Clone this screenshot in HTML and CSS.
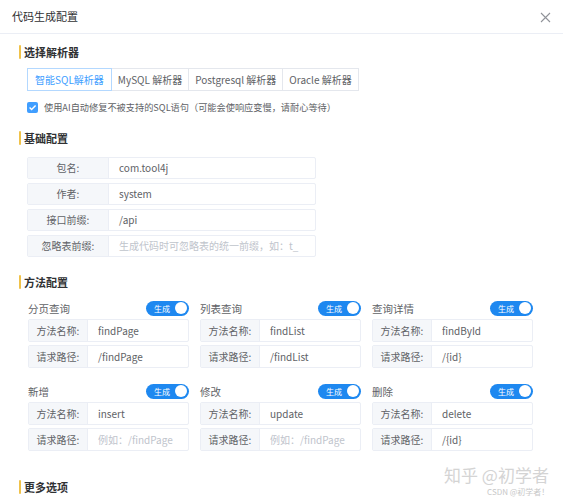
FILE: index.html
```html
<!doctype html>
<html>
<head>
<meta charset="utf-8">
<title>代码生成配置</title>
<link rel="stylesheet" href="styles.css">
</head>
<body>
<div class="dialog">
	<div class="dlg_head">
		<span class="dlg_title">代码生成配置</span>
		<svg class="close" width="11" height="11" viewBox="0 0 11 11"><path d="M1 1L10 10M10 1L1 10" stroke="#909399" stroke-width="1.1" fill="none"/></svg>
	</div>
	<div class="dlg_body">
		<!--选择解析器-->
		<h3 class="sec_tit">选择解析器</h3>
		<div class="tabs">
			<div class="tab active">智能SQL解析器</div>
			<div class="tab">MySQL 解析器</div>
			<div class="tab">Postgresql 解析器</div>
			<div class="tab">Oracle 解析器</div>
		</div>
		<div class="chk">
			<span class="chk_box"><svg width="11" height="11" viewBox="0 0 11 11"><path d="M2.6 5.6L4.6 7.6L8.6 3.4" stroke="#fff" stroke-width="1.4" fill="none"/></svg></span>
			<span>使用AI自动修复不被支持的SQL语句（可能会使响应变慢，请耐心等待）</span>
		</div>
		<!--基础配置-->
		<h3 class="sec_tit sec2">基础配置</h3>
		<div class="form">
			<div class="row"><div class="lab">包名:</div><div class="val">com.tool4j</div></div>
			<div class="row"><div class="lab">作者:</div><div class="val">system</div></div>
			<div class="row"><div class="lab">接口前缀:</div><div class="val">/api</div></div>
			<div class="row"><div class="lab">忽略表前缀:</div><div class="val ph">生成代码时可忽略表的统一前缀，如：t_</div></div>
		</div>
		<!--方法配置-->
		<h3 class="sec_tit sec3">方法配置</h3>
		<div class="methods">
			<div class="card">
				<div class="card_top"><span>分页查询</span><span class="switch">生成<i></i></span></div>
				<div class="row"><div class="lab">方法名称:</div><div class="val">findPage</div></div>
				<div class="row"><div class="lab">请求路径:</div><div class="val">/findPage</div></div>
			</div>
			<div class="card">
				<div class="card_top"><span>列表查询</span><span class="switch">生成<i></i></span></div>
				<div class="row"><div class="lab">方法名称:</div><div class="val">findList</div></div>
				<div class="row"><div class="lab">请求路径:</div><div class="val">/findList</div></div>
			</div>
			<div class="card">
				<div class="card_top"><span>查询详情</span><span class="switch">生成<i></i></span></div>
				<div class="row"><div class="lab">方法名称:</div><div class="val">findById</div></div>
				<div class="row"><div class="lab">请求路径:</div><div class="val">/{id}</div></div>
			</div>
			<div class="card">
				<div class="card_top"><span>新增</span><span class="switch">生成<i></i></span></div>
				<div class="row"><div class="lab">方法名称:</div><div class="val">insert</div></div>
				<div class="row"><div class="lab">请求路径:</div><div class="val ph">例如：/findPage</div></div>
			</div>
			<div class="card">
				<div class="card_top"><span>修改</span><span class="switch">生成<i></i></span></div>
				<div class="row"><div class="lab">方法名称:</div><div class="val">update</div></div>
				<div class="row"><div class="lab">请求路径:</div><div class="val ph">例如：/findPage</div></div>
			</div>
			<div class="card">
				<div class="card_top"><span>删除</span><span class="switch">生成<i></i></span></div>
				<div class="row"><div class="lab">方法名称:</div><div class="val">delete</div></div>
				<div class="row"><div class="lab">请求路径:</div><div class="val">/{id}</div></div>
			</div>
		</div>
		<!--更多选项-->
		<h3 class="sec_tit sec4">更多选项</h3>
	</div>
	<div class="wm">知乎 @初学者</div>
	<div class="wm2">CSDN @初学者！</div>
</div>
</body>
</html>
```
FILE: styles.css
```css
*{margin:0; padding:0; box-sizing:border-box;}
body{background:#fff; font-family:"Noto Sans CJK SC", sans-serif; color:#606266; font-size:10px;}
.dialog{width:563px; height:500px; position:relative; overflow:hidden; background:#fff;}
.dlg_head{height:34px; border-bottom:1px solid #ebeef5; display:flex; align-items:center; justify-content:space-between; padding:0 12px 0 12px;}
.dlg_title{font-size:11px; color:#303133; margin-top:-2px;}
.close{margin-top:1px;}
.dlg_body{padding:0 0 0 19px;}
.sec_tit{font-size:11px; font-weight:bold; color:#303133; line-height:16px; height:16px; margin-top:10px; display:flex; align-items:center; gap:3px;}
.sec_tit:before{content:""; width:2px; height:14px; background:#f0c24a; border-radius:1px;}
.sec2{margin-top:16px;}
.sec3{margin-top:17px;}
.sec4{margin-top:28px;}
.tabs{display:flex; margin:8px 0 0 8px;}
.tab{height:23px; line-height:21px; padding:0 6px; border:1px solid #e4e7ed; border-left:none; color:#606266; font-size:10px; background:#fff;}
.tab:first-child{border-left:1px solid #e4e7ed;}
.tab.active{color:#409eff; border-color:#b3d8ff; border-left:1px solid #b3d8ff; padding:0 7px;}
.chk{display:flex; align-items:center; gap:6px; margin:9px 0 0 8px; height:14px; font-size:9.2px; color:#606266;}
.chk_box{width:11px; height:11px; background:#409eff; border-radius:2px; display:flex;}
.form{width:289px; margin:11px 0 0 8px; display:flex; flex-direction:column; gap:4px;}
.row{height:22px; display:flex; border:1px solid #ebeef5; border-radius:2px; overflow:hidden;}
.lab{width:81px; flex:none; background:#f5f7fa; border-right:1px solid #ebeef5; text-align:center; line-height:20px; color:#606266;}
.val{flex:1; padding-left:10px; line-height:20px; color:#606266;}
.val.ph{color:#c0c4cc;}
.methods{margin:10px 0 0 9px; width:505px; display:grid; grid-template-columns:repeat(3,161px); column-gap:11px; row-gap:15px;}
.card{display:flex; flex-direction:column; gap:3px;}
.card .row{height:23px;}
.card .lab{width:59px; line-height:21px;}
.card .val{line-height:21px;}
.card_top{height:16px; display:flex; align-items:center; justify-content:space-between; color:#606266; font-size:10.5px;}
.switch{width:43px; height:15px; border-radius:8px; background:#1e88f0; color:#fff; font-size:8px; line-height:15px; padding-left:8px; position:relative;}
.switch i{position:absolute; right:2px; top:1.5px; width:12px; height:12px; border-radius:50%; background:#fff;}
.wm{position:absolute; left:444px; top:464px; font-size:17px; line-height:22px; color:#d4d4d4; white-space:nowrap;}
.wm2{position:absolute; left:487px; top:487px; font-size:8px; line-height:10px; color:#c8c8c8; white-space:nowrap;}
```
